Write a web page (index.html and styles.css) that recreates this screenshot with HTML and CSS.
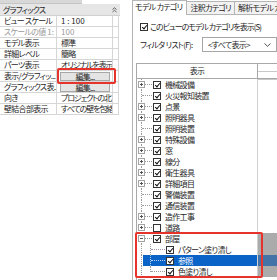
FILE: index.html
```html
<!DOCTYPE html>
<html lang="ja">
<head>
  <meta charset="UTF-8">
  <title>表示/グラフィックス</title>
  <link rel="stylesheet" href="styles.css">
</head>
<body>
<div class="screen">

  <div class="props">
    <div class="thumb"></div>
    <div class="group">
      <span>グラフィックス</span>
      <svg class="fold" width="5" height="6" viewBox="0 0 5 6"><path d="M0.5 2.5 L2.5 0.8 L4.5 2.5 M0.5 5 L2.5 3.3 L4.5 5" fill="none" stroke="#555" stroke-width="0.9"/></svg>
    </div>
    <div class="grid">
      <div>ビュー スケール</div><div class="num">1 : 100</div><div></div>
      <div class="off split"><span>スケールの値</span><span class="num">1:</span></div><div class="off num">100</div><div></div>
      <div>モデル表示</div><div>標準</div><div></div>
      <div>詳細レベル</div><div>簡略</div><div></div>
      <div>パーツ表示</div><div class="tight">オリジナルを表示</div><div></div>
      <div>表示/グラフィッ...</div><div class="btncell"><span class="btn">編集...</span></div><div></div>
      <div>グラフィックス表...</div><div class="btncell"><span class="btn">編集...</span></div><div></div>
      <div>向き</div><div class="tight">プロジェクトの北</div><div></div>
      <div>壁結合部表示</div><div class="tight">すべての壁を包絡</div><div></div>
    </div>
  </div>

  <div class="vg">
    <div class="tabs">
      <div class="tab on">モデル カテゴリ</div>
      <div class="tab">注釈カテゴリ</div>
      <div class="tab">解析モデル カテゴリ</div>
    </div>
    <div class="sheet">
      <div class="showall"><i class="cb on"></i><span>このビューのモデル カテゴリを表示(S)</span></div>
      <div class="filter">
        <span>フィルタ リスト(F):</span>
        <div class="select"><span>&lt;すべて表示&gt;</span><svg width="7" height="4" viewBox="0 0 7 4"><path d="M0.5 0.5 L3.5 3.3 L6.5 0.5" fill="none" stroke="#444" stroke-width="0.9"/></svg></div>
      </div>

      <div class="table">
        <div class="thead">
          <div class="h1">表示</div>
          <div class="h2"><div></div><div></div></div>
        </div>
        <div class="trow"><div class="tree"><i class="twig"><b class="exp plus"></b></i><i class="cb on"></i><span>機械設備</span></div><div class="c2"></div></div>
        <div class="trow"><div class="tree"><i class="twig"></i><i class="cb on"></i><span>火災報知装置</span></div><div class="c2"></div></div>
        <div class="trow"><div class="tree"><i class="twig"><b class="exp plus"></b></i><i class="cb on"></i><span>点景</span></div><div class="c2"></div></div>
        <div class="trow"><div class="tree"><i class="twig"><b class="exp plus"></b></i><i class="cb on"></i><span>照明器具</span></div><div class="c2"></div></div>
        <div class="trow"><div class="tree"><i class="twig"></i><i class="cb on"></i><span>照明装置</span></div><div class="c2"></div></div>
        <div class="trow"><div class="tree"><i class="twig"><b class="exp plus"></b></i><i class="cb on"></i><span>特殊設備</span></div><div class="c2"></div></div>
        <div class="trow"><div class="tree"><i class="twig"><b class="exp plus"></b></i><i class="cb on"></i><span>窓</span></div><div class="c2"></div></div>
        <div class="trow"><div class="tree"><i class="twig"><b class="exp plus"></b></i><i class="cb on"></i><span>線分</span></div><div class="c2"></div></div>
        <div class="trow"><div class="tree"><i class="twig"><b class="exp plus"></b></i><i class="cb on"></i><span>衛生器具</span></div><div class="c2"></div></div>
        <div class="trow"><div class="tree"><i class="twig"><b class="exp plus"></b></i><i class="cb on"></i><span>詳細項目</span></div><div class="c2"></div></div>
        <div class="trow"><div class="tree"><i class="twig"></i><i class="cb on"></i><span>警備装置</span></div><div class="c2"></div></div>
        <div class="trow"><div class="tree"><i class="twig"></i><i class="cb on"></i><span>通信装置</span></div><div class="c2"></div></div>
        <div class="trow"><div class="tree"><i class="twig"><b class="exp plus"></b></i><i class="cb on"></i><span>造作工事</span></div><div class="c2"></div></div>
        <div class="trow"><div class="tree"><i class="twig"><b class="exp plus"></b></i><i class="cb"></i><span>道路</span></div><div class="c2"></div></div>
        <div class="trow"><div class="tree"><i class="twig"><b class="exp"></b></i><i class="cb on"></i><span>部屋</span></div><div class="c2 dim"></div></div>
        <div class="trow child"><div class="tree"><div class="branch"><i class="twig"></i><i class="cb on"></i><span>パターン塗り潰し</span></div></div><div class="c2 dim"></div></div>
        <div class="trow child sel"><div class="tree"><div class="branch"><i class="twig"></i><i class="cb on"></i><span>参照</span></div></div><div class="c2 dim"></div></div>
        <div class="trow child last"><div class="tree"><div class="branch"><i class="twig"></i><i class="cb on"></i><span>色塗り潰し</span></div></div><div class="c2 dim"></div></div>
        <div class="trow"><div class="tree"><i class="twig"><b class="exp plus"></b></i><i class="cb on"></i></div><div class="c2"></div></div>
      </div>
    </div>
  </div>

  <div class="mark mark-edit"></div>
  <div class="mark mark-room"></div>
</div>
</body>
</html>
```

FILE: styles.css
```css
* {
  box-sizing: border-box;
}

body {
  margin: 0;
  background: #fff;
  font-family: "Noto Sans CJK JP", "Noto Sans", sans-serif;
  font-size: 8px;
  letter-spacing: -0.7px;
  color: #1e1e1e;
  font-feature-settings: "palt";
}

.screen {
  width: 277px;
  height: 280px;
  overflow: hidden;
  position: relative;
  display: flex;
}

/* property palette */

.props {
  width: 120px;
  flex: none;
}

.thumb {
  height: 4px;
  width: 82px;
  background: #d8d8d8;
  border-bottom: 1px solid #c6c6c6;
}

.group {
  height: 12px;
  background: #e6e6e6;
  border-bottom: 1px solid #d0d0d0;
  display: flex;
  align-items: center;
  justify-content: space-between;
  padding: 0 3px 0 3px;
  line-height: 11px;
}

.grid {
  display: grid;
  grid-template-columns: 57px 56px 6px;
}

.grid > div {
  height: 11px;
  line-height: 10px;
  padding-left: 4px;
  border-bottom: 1px solid #d6d6d6;
  border-right: 1px solid #d6d6d6;
  white-space: nowrap;
  overflow: hidden;
}

.grid > div.off {
  color: #9a9a9a;
}

.grid > div.split {
  display: flex;
  justify-content: space-between;
  padding-right: 2px;
}

.grid .num {
  letter-spacing: 0;
}

.grid > div.tight {
  letter-spacing: -1.1px;
}

.grid > div.btncell {
  padding: 1px 2px 0 3px;
}

.btn {
  display: block;
  height: 9px;
  line-height: 8px;
  text-align: center;
  background: #e4e4e4;
  border: 1px solid #a8a8a8;
}

/* visibility dialog */

.vg {
  flex: 1;
  margin-left: 12px;
  min-width: 0;
}

.tabs {
  display: flex;
  height: 14px;
  align-items: flex-end;
  white-space: nowrap;
}

.tab {
  height: 13px;
  line-height: 12px;
  padding: 0 3px;
  background: #f2f2f2;
  border: 1px solid #b4b4b4;
  border-bottom: none;
  margin-left: -1px;
}

.tab.on {
  height: 15px;
  background: #fff;
  margin-left: 0;
  margin-bottom: -1px;
  padding: 0 4px 0 2px;
  position: relative;
}

.sheet {
  height: 266px;
  border-left: 1px solid #b4b4b4;
  border-top: 1px solid #b4b4b4;
  padding: 7px 0 0 3px;
}

.showall {
  display: flex;
  align-items: center;
  gap: 2px;
  height: 9px;
  padding-left: 4px;
  white-space: nowrap;
}

.showall span {
  letter-spacing: -1px;
}

.filter {
  display: flex;
  align-items: center;
  justify-content: space-between;
  margin-top: 6px;
  padding-left: 4px;
  width: 141px;
  white-space: nowrap;
}

.select {
  width: 75px;
  height: 15px;
  border: 1px solid #a6a6a6;
  display: flex;
  align-items: center;
  justify-content: space-between;
  padding: 0 5px 0 5px;
}

/* checkboxes */

.cb {
  width: 8px;
  height: 8px;
  border: 1px solid #333;
  background: #fff;
  flex: none;
  position: relative;
}

.cb.on::after {
  content: "";
  position: absolute;
  left: 1.5px;
  top: 0;
  width: 2px;
  height: 4px;
  border-right: 1.3px solid #111;
  border-bottom: 1.3px solid #111;
  transform: rotate(40deg);
}

/* category tree */

.table {
  margin-top: 11px;
  border-left: 1px solid #a8a8a8;
  width: 150px;
}

.thead {
  display: grid;
  grid-template-columns: 121px 1fr;
  height: 16px;
  border-top: 1px solid #a8a8a8;
  border-bottom: 1px solid #a8a8a8;
}

.h1 {
  text-align: center;
  line-height: 14px;
  border-right: 1px solid #a8a8a8;
}

.h2 > div {
  height: 8px;
  border-bottom: 1px solid #c8c8c8;
}

.trow {
  display: grid;
  grid-template-columns: 121px 1fr;
  height: 11px;
}

.tree {
  display: flex;
  align-items: center;
  border-right: 1px solid #d0d0d0;
  white-space: nowrap;
}

.tree span {
  margin-left: 4px;
  line-height: 11px;
}

.twig {
  width: 16px;
  height: 11px;
  flex: none;
  position: relative;
}

.twig::before {
  content: "";
  position: absolute;
  left: 4px;
  top: 0;
  bottom: 0;
  border-left: 1px dotted #9a9a9a;
}

.twig::after {
  content: "";
  position: absolute;
  left: 5px;
  right: 1px;
  top: 5px;
  border-top: 1px dotted #9a9a9a;
}

.exp {
  position: absolute;
  left: 1px;
  top: 2px;
  width: 7px;
  height: 7px;
  border: 1px solid #a4a4a4;
  background: #fff;
  z-index: 1;
}

.exp::before {
  content: "";
  position: absolute;
  left: 1px;
  top: 2px;
  width: 3px;
  height: 1px;
  background: #555;
}

.exp.plus::after {
  content: "";
  position: absolute;
  left: 2px;
  top: 1px;
  width: 1px;
  height: 3px;
  background: #555;
}

.child .tree {
  padding-left: 6px;
  background: repeating-linear-gradient(#9a9a9a 0 1px, transparent 1px 2px) 4px 0 / 1px 100% no-repeat;
}

.branch {
  flex: 1;
  height: 11px;
  display: flex;
  align-items: center;
}

.child .twig {
  width: 23px;
}

.child .twig::before {
  left: 7px;
}

.child .twig::after {
  left: 8px;
}

.child.last .twig::before {
  bottom: 5px;
}

.sel .branch {
  background: #0a64c8;
  color: #fff;
}

.sel .twig::before,
.sel .twig::after {
  border-color: #b8d0ee;
}

.c2.dim {
  background: #ababab;
}

.sel .c2.dim {
  background: #4473a8;
}

/* red annotation frames */

.mark {
  position: absolute;
  border: 2px solid #e6342c;
  border-radius: 2px;
}

.mark-edit {
  left: 57px;
  top: 68px;
  width: 59px;
  height: 16px;
}

.mark-room {
  left: 135px;
  top: 232px;
  width: 128px;
  height: 46px;
}
```
